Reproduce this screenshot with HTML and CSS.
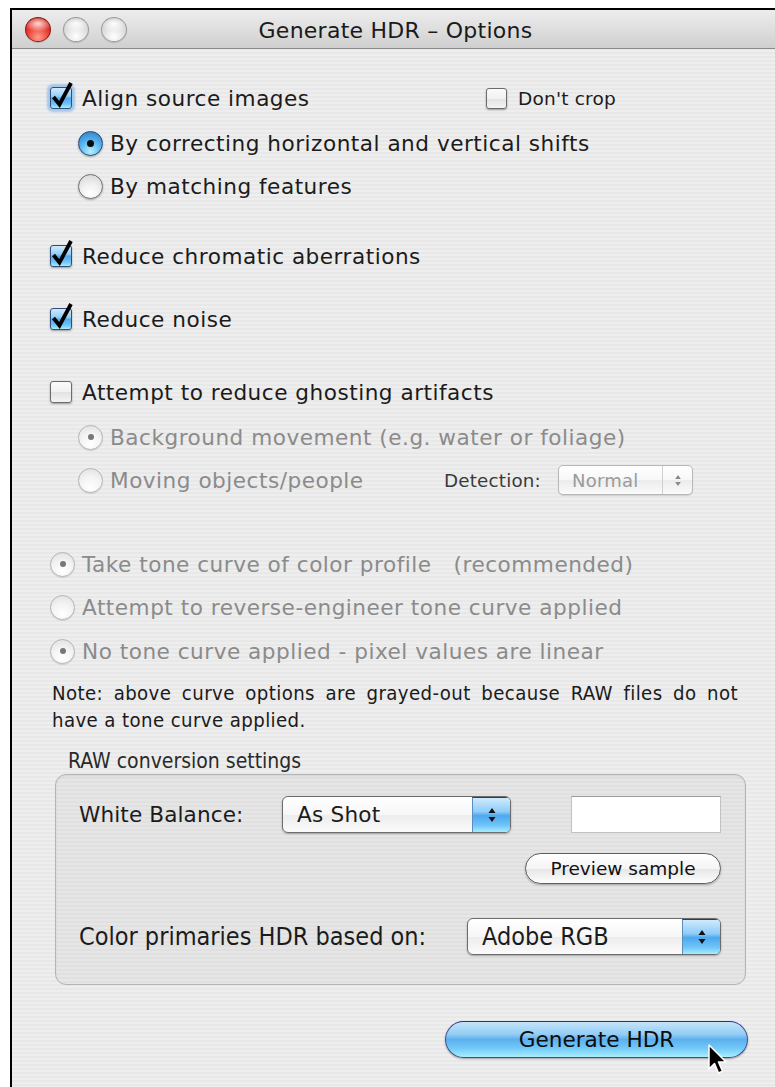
FILE: index.html
```html
<!DOCTYPE html>
<html>
<head>
<meta charset="utf-8">
<title>Generate HDR - Options</title>
<link rel="stylesheet" href="styles.css">
</head>
<body>
<div class="window">
  <div class="titlebar">
    <div class="lights">
      <span class="light red"></span>
      <span class="light"></span>
      <span class="light"></span>
    </div>
    <div class="title">Generate HDR – Options</div>
    <div></div>
  </div>

  <div class="content">
    <div class="row r1">
      <div class="align-main">
        <span class="cb checked focus"><svg class="tick" viewBox="0 0 22 22"><path d="M3.5 10 L9.5 17.5 L21 -4"/></svg></span>
        <span class="lbl">Align source images</span>
      </div>
      <div class="opt-small">
        <span class="cb small"></span>
        <span class="lbl small-lbl">Don't crop</span>
      </div>
    </div>
    <div class="row sub r2"><span class="rb on"></span><span class="lbl rl">By correcting horizontal and vertical shifts</span></div>
    <div class="row sub r3"><span class="rb"></span><span class="lbl rl">By matching features</span></div>

    <div class="row r4"><span class="cb checked"><svg class="tick" viewBox="0 0 22 22"><path d="M3.5 10 L9.5 17.5 L21 -4"/></svg></span><span class="lbl">Reduce chromatic aberrations</span></div>
    <div class="row r5"><span class="cb checked"><svg class="tick" viewBox="0 0 22 22"><path d="M3.5 10 L9.5 17.5 L21 -4"/></svg></span><span class="lbl">Reduce noise</span></div>

    <div class="row r6"><span class="cb"></span><span class="lbl">Attempt to reduce ghosting artifacts</span></div>
    <div class="row sub r7"><span class="rb dis on"></span><span class="lbl rl dim">Background movement (e.g. water or foliage)</span></div>
    <div class="row sub r8">
      <div class="move-main"><span class="rb dis"></span><span class="lbl rl dim">Moving objects/people</span></div>
      <span class="det-lbl">Detection:</span>
      <div class="popup dis-pop"><span class="pop-txt">Normal</span><span class="pop-arrows"><svg viewBox="0 0 10 18"><path d="M5 2 L8.5 7 H1.5 Z M5 16 L8.5 11 H1.5 Z"/></svg></span></div>
    </div>

    <div class="row r9"><span class="rb dis on"></span><span class="lbl rl dim">Take tone curve of color profile&nbsp;&nbsp;&nbsp;(recommended)</span></div>
    <div class="row r10"><span class="rb dis"></span><span class="lbl rl dim">Attempt to reverse-engineer tone curve applied</span></div>
    <div class="row r11"><span class="rb dis on"></span><span class="lbl rl dim">No tone curve applied - pixel values are linear</span></div>

    <p class="note">Note: above curve options are grayed-out because RAW files do not have a tone curve applied.</p>

    <div class="group-lbl">RAW conversion settings</div>
    <div class="group">
      <div class="g-row wb">
        <span class="g-lbl wb-lbl">White Balance:</span>
        <div class="popup wb-pop"><span class="pop-txt">As Shot</span><span class="pop-arrows blue"><svg viewBox="0 0 10 18"><path d="M5 2 L8.5 7 H1.5 Z M5 16 L8.5 11 H1.5 Z"/></svg></span></div>
        <div class="field"></div>
      </div>
      <div class="g-row prev">
        <button class="pill">Preview sample</button>
      </div>
      <div class="g-row prim">
        <span class="g-lbl cond">Color primaries HDR based on:</span>
        <div class="popup prim-pop"><span class="pop-txt cond">Adobe RGB</span><span class="pop-arrows blue"><svg viewBox="0 0 10 18"><path d="M5 2 L8.5 7 H1.5 Z M5 16 L8.5 11 H1.5 Z"/></svg></span></div>
      </div>
    </div>

    <div class="actions">
      <button class="default-btn">Generate HDR
        <svg class="cursor" viewBox="0 0 20 32"><path d="M1 1 L1 25 L6.5 19.5 L10.5 29 L14.5 27.3 L10.5 18 L18 18 Z"/></svg>
      </button>
    </div>
  </div>
</div>
</body>
</html>
```

FILE: styles.css
```css
* { box-sizing: border-box; }

html, body {
  margin: 0;
  padding: 0;
  height: 100%;
  overflow: hidden;
  background: #fff;
}

body {
  font-family: "DejaVu Sans", "Liberation Sans", sans-serif;
  color: #1b1b1b;
}

/* window frame */
.window {
  margin: 8px 0 0 10px;
  height: 1079px;
  border-top: 2px solid #000;
  border-left: 2px solid #000;
  background: repeating-linear-gradient(to bottom, #eeeeee 0 2px, #e8e8e8 2px 4px);
}

.titlebar {
  height: 39px;
  display: grid;
  grid-template-columns: 1fr auto 1fr;
  align-items: center;
  background: linear-gradient(#ededed, #e0e0e0 45%, #cfcfcf);
  border-bottom: 1px solid #8a8a8a;
}

.lights {
  display: flex;
  gap: 12px;
  padding-left: 13px;
}

.light {
  width: 26px;
  height: 25px;
  border-radius: 50%;
  border: 1px solid #9c9c9c;
  background:
    radial-gradient(ellipse 60% 35% at 50% 25%, rgba(255,255,255,.95), rgba(255,255,255,0) 100%),
    radial-gradient(circle at 50% 80%, #ffffff, #dcdcdc 55%, #b4b4b4 100%);
  box-shadow: 0 1px 1px rgba(0,0,0,.15);
}

.light.red {
  border-color: #8d1a12;
  background:
    radial-gradient(ellipse 60% 35% at 50% 25%, rgba(255,230,225,.95), rgba(255,255,255,0) 100%),
    radial-gradient(circle at 50% 85%, #ff9d8c, #e8322a 55%, #a8140e 100%);
}

.title {
  font-size: 22px;
  letter-spacing: 0.25px;
  color: #1a1a1a;
  padding: 3px 0 0 4px;
}

/* dialog body */
.content {
  padding: 34px 29px 0 38px;
}

.row {
  height: 30px;
  display: flex;
  align-items: center;
}

.sub { padding-left: 28px; }

.r2 { margin-top: 15px; }
.r3 { margin-top: 13px; }
.r4 { margin-top: 40px; }
.r5 { margin-top: 33px; }
.r6 { margin-top: 43px; }
.r7 { margin-top: 15px; }
.r8 { margin-top: 13px; }
.r9 { margin-top: 54px; }
.r10 { margin-top: 13px; }
.r11 { margin-top: 14px; }

.lbl {
  font-size: 21.6px;
  letter-spacing: 0.5px;
  margin-left: 10px;
  white-space: nowrap;
}

.lbl.rl { margin-left: 7px; }

.dim { color: #8b8b8b; }

.align-main {
  width: 436px;
  display: flex;
  align-items: center;
}

.opt-small {
  display: flex;
  align-items: center;
}

.small-lbl {
  font-size: 18.5px;
  letter-spacing: 0.2px;
  margin-left: 11px;
}

.move-main {
  width: 366px;
  display: flex;
  align-items: center;
}

.det-lbl {
  font-size: 18.3px;
  letter-spacing: 0.2px;
  color: #3a3a3a;
  width: 114px;
}

/* checkboxes */
.cb {
  position: relative;
  flex: none;
  width: 22px;
  height: 22px;
  border-radius: 3px;
  border: 1px solid #6b6b6b;
  background: linear-gradient(#fbfbfb, #f1f1f1 50%, #e2e2e2 51%, #f4f4f4);
  box-shadow: 0 1px 2px rgba(0,0,0,.35);
}

.cb.checked {
  border-color: #2f4f7a;
  background: linear-gradient(#cfeafc 0%, #96d0f7 40%, #53aaee 52%, #6fc3f6 80%, #a9ecff 100%);
}

.cb.focus {
  box-shadow: 0 0 2px 3px rgba(110, 170, 230, .55);
}

.cb.small {
  width: 21px;
  height: 21px;
}

.tick {
  position: absolute;
  left: -1px;
  top: -1px;
  width: 22px;
  height: 22px;
  overflow: visible;
}

.tick path {
  fill: none;
  stroke: #000;
  stroke-width: 3.8;
  stroke-linejoin: miter;
}

/* radio buttons */
.rb {
  flex: none;
  width: 25px;
  height: 25px;
  border-radius: 50%;
  border: 1px solid #6e6e6e;
  background: radial-gradient(circle at 50% 80%, #ffffff, #f0f0f0 45%, #d2d2d2 100%);
  box-shadow: 0 1px 2px rgba(0,0,0,.3);
  display: flex;
  align-items: center;
  justify-content: center;
}

.rb.on {
  border-color: #27466f;
  background: radial-gradient(circle at 50% 85%, #b5f0ff, #56b3ee 50%, #2c77c7 100%);
}

.rb.on::after {
  content: "";
  width: 7px;
  height: 7px;
  border-radius: 50%;
  background: #0a0a0a;
}

.rb.dis {
  border-color: #b5b5b5;
  background: radial-gradient(circle at 50% 80%, #ffffff, #f3f3f3 50%, #dedede 100%);
  box-shadow: 0 1px 1px rgba(0,0,0,.12);
}

.rb.dis.on::after {
  width: 6px;
  height: 6px;
  background: #777;
}

/* popup menus */
.popup {
  display: flex;
  align-items: stretch;
  height: 37px;
  border: 1px solid #6c6c6c;
  border-radius: 6px;
  background: linear-gradient(#ffffff, #f7f7f7 50%, #ececec 51%, #fbfbfb);
  box-shadow: 0 1px 2px rgba(0,0,0,.3);
  overflow: hidden;
}

.pop-txt {
  flex: 1;
  display: flex;
  align-items: center;
  padding-left: 14px;
  font-size: 21.6px;
  letter-spacing: 0.2px;
}

.pop-arrows {
  width: 38px;
  display: flex;
  align-items: center;
  justify-content: center;
}

.pop-arrows svg {
  width: 10px;
  height: 18px;
}

.pop-arrows path { fill: #111; }

.pop-arrows.blue {
  background: linear-gradient(#cfeafc 0%, #8fcdf7 40%, #4ea8ee 52%, #6ec4f7 80%, #a6ecff 100%);
  border-left: 1px solid #5d8dbd;
  border-top: 1px solid #1e3c8a;
}

.dis-pop {
  width: 135px;
  height: 30px;
  border-color: #b7b7b7;
  border-radius: 5px;
  box-shadow: 0 1px 1px rgba(0,0,0,.12);
}

.dis-pop .pop-txt {
  font-size: 18px;
  color: #9a9a9a;
  padding-left: 13px;
}

.dis-pop .pop-arrows {
  width: 30px;
  border-left: 1px solid #cfcfcf;
}

.dis-pop .pop-arrows svg { width: 8px; height: 15px; }
.dis-pop .pop-arrows path { fill: #888; }

/* note */
.note {
  margin: 14px 8px 0 2px;
  font-family: "DejaVu Sans Condensed", "DejaVu Sans", sans-serif;
  font-size: 20.2px;
  letter-spacing: 0.4px;
  line-height: 27px;
  text-align: justify;
  color: #1b1b1b;
}

/* RAW group */
.group-lbl {
  margin: 15px 0 0 18px;
  height: 24px;
  line-height: 24px;
  font-family: "DejaVu Sans Condensed", "DejaVu Sans", sans-serif;
  font-size: 21px;
  color: #2a2a2a;
}

.group {
  margin: 1px 0 0 5px;
  height: 211px;
  border: 1px solid #b4b4b4;
  border-radius: 11px;
  padding: 21px 24px 0 23px;
  background: repeating-linear-gradient(to bottom, #e6e6e6 0 2px, #e0e0e0 2px 4px);
  box-shadow: inset 0 1px 2px rgba(0,0,0,.08);
}

.g-row {
  display: flex;
  align-items: center;
}

.g-lbl {
  font-size: 21.6px;
  white-space: nowrap;
}

.wb-lbl { width: 203px; letter-spacing: 0.1px; }

.wb-pop { width: 229px; }

.field {
  margin-left: auto;
  width: 150px;
  height: 37px;
  background: #fff;
  border: 1px solid #c2c2c2;
  border-top-color: #9a9a9a;
}

.prev {
  justify-content: flex-end;
  margin-top: 20px;
}

.pill {
  width: 196px;
  height: 31px;
  border-radius: 16px;
  border: 1px solid #5e5e5e;
  background: linear-gradient(#ffffff, #f4f4f4 50%, #e6e6e6 51%, #fdfdfd);
  box-shadow: 0 1px 2px rgba(0,0,0,.3);
  font-family: "DejaVu Sans", sans-serif;
  font-size: 18.5px;
  color: #111;
  padding: 0;
}

.prim {
  margin-top: 34px;
  justify-content: space-between;
}

.cond {
  font-family: "DejaVu Sans Condensed", "DejaVu Sans", sans-serif;
  font-size: 25px;
  letter-spacing: 0;
}

.prim-pop { width: 254px; }

/* default action */
.actions {
  display: flex;
  justify-content: flex-end;
  margin: 36px -2px 0 0;
}

.default-btn {
  position: relative;
  width: 303px;
  height: 37px;
  border-radius: 19px;
  border: 1px solid #3e4f8c;
  border-top-color: #26338f;
  background: linear-gradient(#c4e4fb 0%, #93cdf5 35%, #5cb0ee 50%, #72c8f8 75%, #a8efff 100%);
  box-shadow: 0 1px 2px rgba(0,0,0,.35);
  font-family: "DejaVu Sans", sans-serif;
  font-size: 21.6px;
  color: #0c0c0c;
  padding: 0;
}

.cursor {
  position: absolute;
  left: 262px;
  top: 22px;
  width: 20px;
  height: 32px;
}

.cursor path {
  fill: #000;
  stroke: #fff;
  stroke-width: 1.5;
  stroke-linejoin: round;
}
```
